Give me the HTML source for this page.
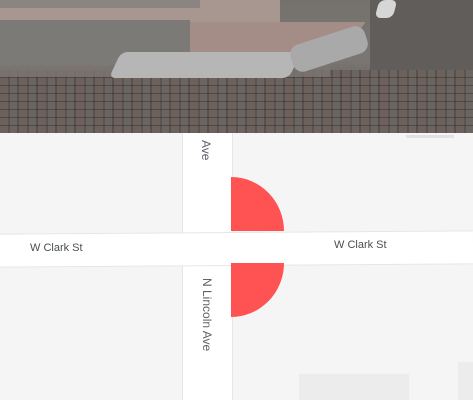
<!DOCTYPE html>
<html><head><style>
body{margin:0;width:473px;height:400px;overflow:hidden;background:#f5f5f5;position:relative;font-family:"Liberation Sans",sans-serif}
.a{position:absolute}
</style></head><body>
<div class="a" style="left:0;top:0;width:473px;height:133px;background:linear-gradient(180deg,#75726e 0%,#7a7672 45%,#6a625c 70%,#5e5550 100%)"></div>
<div class="a" style="left:0;top:0;width:280px;height:22px;background:#a89790"></div>
<div class="a" style="left:0;top:0;width:200px;height:8px;background:#8a8580"></div>
<div class="a" style="left:180px;top:22px;width:175px;height:30px;background:#a48d86;transform:skewX(-35deg)"></div>
<div class="a" style="left:0;top:20px;width:190px;height:45px;background:#7c7a77"></div>
<div class="a" style="left:370px;top:0;width:103px;height:110px;background:#605d5a"></div>
<div class="a" style="left:0;top:70px;width:473px;height:63px;background:repeating-linear-gradient(90deg,#6d615c 0 8px,#5a5451 8px 10px,#6b6561 10px 17px,#57504d 17px 19px),#605550"></div>
<div class="a" style="left:0;top:70px;width:473px;height:63px;background:repeating-linear-gradient(180deg,transparent 0 7px,rgba(45,40,38,.45) 7px 8px)"></div>
<div class="a" style="left:0;top:65px;width:330px;height:12px;background:#7a7570;opacity:.8"></div>
<div class="a" style="left:115px;top:52px;width:180px;height:26px;background:#b6b6b6;border-radius:6px;transform:skewX(-25deg)"></div>
<div class="a" style="left:290px;top:35px;width:78px;height:28px;background:#a9a9a9;border-radius:10px;transform:rotate(-18deg)"></div>
<div class="a" style="left:377px;top:0;width:18px;height:18px;background:#d6d6d6;border-radius:6px;transform:skewX(-15deg)"></div>
<div class="a" style="left:406px;top:135px;width:48px;height:3px;background:#e2e2e2"></div>
<div class="a" style="left:182px;top:133px;width:49px;height:267px;background:#fff;border-left:1px solid #e6e6e6;border-right:1px solid #e6e6e6"></div>
<div class="a" style="left:0;top:232px;width:473px;height:32px;background:#fff;transform:rotate(-0.4deg);border-top:1px solid #e6e6e6;border-bottom:1px solid #e6e6e6"></div>
<div class="a" style="left:231px;top:177px;width:53px;height:54px;background:#ff5252;border-top-right-radius:53px 54px"></div>
<div class="a" style="left:231px;top:263px;width:53px;height:54px;background:#ff5252;border-bottom-right-radius:53px 54px"></div>
<div class="a" style="left:299px;top:374px;width:110px;height:26px;background:#ececec"></div>
<div class="a" style="left:458px;top:362px;width:15px;height:38px;background:#ececec"></div>
<div class="a" style="left:30px;top:242px;font-size:11px;color:#4a4e52">W Clark St</div>
<div class="a" style="left:334px;top:239px;font-size:11px;color:#4a4e52">W Clark St</div>
<div class="a" style="top:140px;font-size:12px;color:#5f6368;transform:rotate(90deg);transform-origin:0 0;left:213px">Ave</div>
<div class="a" style="left:214px;top:278px;font-size:12px;color:#5f6368;transform:rotate(90deg);transform-origin:0 0;white-space:nowrap">N Lincoln Ave</div>
</body></html>
